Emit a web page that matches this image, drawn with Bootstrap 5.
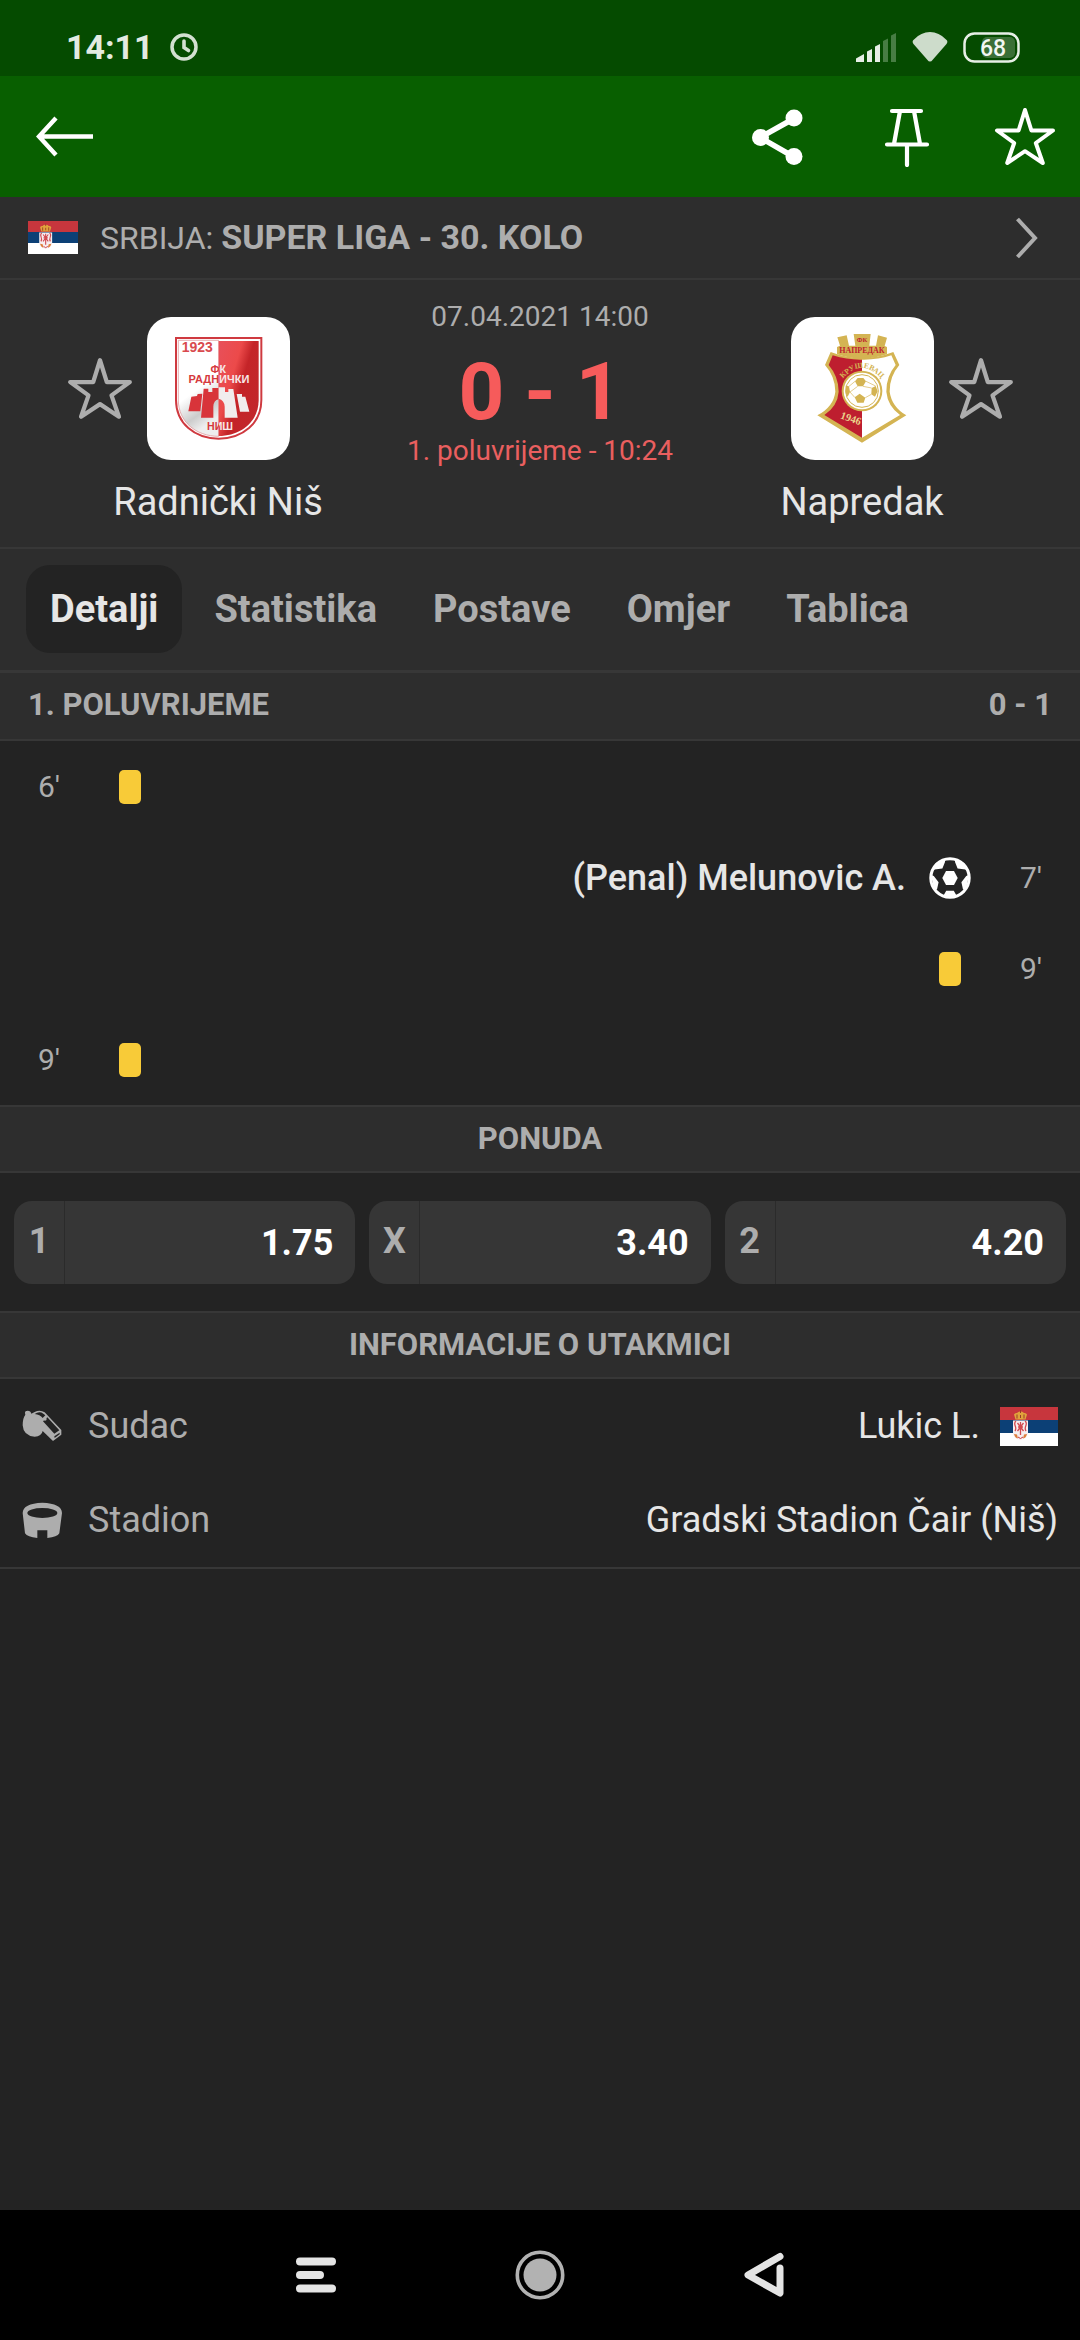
<!DOCTYPE html>
<html lang="hr">
<head>
<meta charset="utf-8">
<meta name="viewport" content="width=device-width, initial-scale=1">
<title>Radnički Niš - Napredak</title>
<link href="https://cdn.jsdelivr.net/npm/bootstrap@5.3.0/dist/css/bootstrap.min.css" rel="stylesheet">
<style>
  :root { --page:#232323; --panel:#2d2d2d; --rule:#373737; --dim:#adadad; --bright:#e6e6e6; --live:#f65b5b; }
  body { background:var(--page); color:var(--bright); font-family:Roboto,"Liberation Sans",sans-serif; font-size:36px; line-height:44px; }
  svg { display:block; flex:none; }
  .plain-btn { background:none; border:0; padding:0; color:inherit; }
  .status-bar { background:#054b00; height:76px; padding:20px 60px 0 66px; color:#e3ebe2; }
  .status-left { gap:16px; }
  .status-right { gap:15px; padding-top:12px; }
  .clock-text { font-size:34px; line-height:54px; font-weight:700; }
  .app-bar { background:#085f00; height:121px; padding:0 24px 0 34px; color:#fff; }
  .app-actions { gap:64px; }
  .share-btn { padding-right:16px; }
  .league-link { background:var(--panel); border-bottom:2px solid var(--rule); height:83px; padding:0 42px 0 28px; gap:22px; color:var(--dim); font-size:32px; text-decoration:none; }
  .league-link strong { font-size:34px; }
  .match-head { background:var(--panel); border-bottom:2px solid var(--rule); height:269px; color:var(--dim); }
  .team-side { flex:1 1 0; padding-top:37px; }
  .side-home { padding-left:36px; }
  .side-away { padding-right:36px; }
  .team-grid { display:grid; grid-template-columns:1fr 143px 1fr; column-gap:14px; align-items:center; }
  .team-logo { border-radius:24px; background:#fff; overflow:hidden; }
  .team-name { font-size:38px; line-height:48px; padding-top:18px; color:var(--bright); }
  .score-col { width:280px; padding-top:20px; white-space:nowrap; }
  .kickoff { font-size:28px; line-height:34px; }
  .score-now { font-size:80px; line-height:80px; font-weight:700; color:var(--live); padding-top:18px; }
  .match-phase { font-size:28px; line-height:34px; color:#ea5f5f; padding-top:2px; }
  .tab-strip { background:var(--panel); border-bottom:3px solid var(--rule); height:124px; padding:16px 26px 0; gap:8px; }
  .tab-strip .nav-link { font-size:38px; line-height:88px; height:88px; padding:0 24px; font-weight:700; color:var(--dim); border-radius:24px; }
  .tab-strip .nav-link.active { background:var(--page); color:var(--bright); }
  .sect-title { background:var(--panel); border-bottom:2px solid var(--rule); height:68px; padding:0 28px; font-size:31px; line-height:64px; font-weight:700; color:var(--dim); margin:0; }
  .sect-ruled { border-top:2px solid var(--rule); text-align:center; }
  .event-row { height:91px; }
  .event-min { width:98px; text-align:center; font-size:30px; color:var(--dim); }
  .event-icon { width:64px; display:flex; justify-content:center; }
  .event-name { font-size:36px; font-weight:500; padding-right:12px; }
  .yellow-card { width:22px; height:34px; border-radius:5px; background:#f8cb38; }
  .odds-row { padding:28px 14px 27px; gap:14px; }
  .odd-btn { flex:1 1 0; background:#363636; border:0; border-radius:18px; height:83px; padding:0; display:flex; align-items:center; font-weight:700; color:#fff; overflow:hidden; }
  .odd-key { width:51px; height:83px; line-height:80px; border-right:1px solid #2b2b2b; color:var(--dim); }
  .odd-val { flex:1; line-height:80px; text-align:right; padding-right:22px; }
  .info-list { border-bottom:2px solid var(--rule); margin:0; }
  .info-row { height:94px; padding:0 22px; }
  .info-row dt { font-weight:400; color:var(--dim); display:flex; align-items:center; gap:24px; }
  .info-row dd { margin:0; display:flex; align-items:center; gap:20px; }
  .info-icon { width:42px; }
  .sys-nav { background:#000; height:130px; }
  .sys-nav button { width:224px; display:flex; justify-content:center; }
</style>
<script src="https://cdn.jsdelivr.net/npm/bootstrap@5.3.0/dist/js/bootstrap.bundle.min.js"></script>
</head>
<body>
<svg width="0" height="0" class="position-absolute" aria-hidden="true">
  <defs>
    <symbol id="star" viewBox="0 0 62 62">
      <path d="M31 4 37.4 24.5H59L41.8 37 48.8 57 31 45.2 13.2 57 20.2 37 3 24.5H24.6Z" fill="none" stroke="currentColor" stroke-width="4" stroke-linejoin="round"/>
    </symbol>
    <symbol id="flag-rs" viewBox="0 0 58 39" preserveAspectRatio="none">
      <path fill="#c7363d" d="M0 0h58v13H0z"/><path fill="#0c4076" d="M0 13h58v13H0z"/><path fill="#fff" d="M0 26h58v13H0z"/>
      <path d="M13 13.500h15v12q0 6-7.500 7.500-7.500-1.500-7.500-7.500z" fill="#f6eef0"/>
      <path d="M16 14c-4 3 2 6-1 10M25 14c4 3-2 6 1 10M20.500 15v13M18 20h5M17.500 16l6 8M23.500 16l-6 8" stroke="#d24a50" stroke-width="1.300" fill="none"/>
      <path d="M14 27q1 4 4 4.500l-1-4zM27 27q-1 4-4 4.500l1-4z" fill="#dd7d3a"/>
      <path d="M18 30q2.500 3 5 0" stroke="#c7363d" fill="none"/>
      <path d="M15.500 12.500 14 7.500q1-2 3-1.500 1.500-2 3.500-1.500 2-.5 3.500 1.500 2-.5 3 1.500l-1.500 5z" fill="#e0a33c"/>
      <path d="M20.500 3v3M17 7.500v4M24 7.500v4M20.500 8v3" stroke="#9c3a28" stroke-width="1"/>
    </symbol>
  </defs>
</svg>
<div class="d-flex flex-column min-vh-100">
  <div class="status-bar d-flex justify-content-between align-items-start">
    <div class="status-left d-flex align-items-center">
      <span class="clock-text">14:11</span>
      <svg width="28" height="28" viewBox="0 0 28 28" fill="none" stroke="#d3e0d1"><circle cx="14" cy="14" r="12" stroke-width="3.500"/><path d="M14 8v6.500l4.500 3" stroke-width="3.600" stroke-linecap="round"/></svg>
    </div>
    <div class="status-right d-flex">
      <svg width="42" height="31" viewBox="0 0 42 31"><path fill="#e7efe6" d="M1 30v-3.500l8-4.500v8zM12 30V19.500l5-2.500v13zM20 30V14.500l5-2.500v18z"/><path fill="#477d43" d="M28 30V9l5-2.500V30zM36 30V3.500L41 1v29z"/></svg>
      <svg width="36" height="30" viewBox="0 0 36 30"><path d="M18 29.500q-1.500 0-2.500-1.500L1.500 12q-2-3 .5-4.500Q9 0 18 0t16 7.500q2.500 1.500.5 4.500L20.500 28q-1 1.500-2.500 1.500z" fill="#cddccb"/></svg>
      <svg width="57" height="31" viewBox="0 0 57 31"><rect x="19" y="5" width="33" height="21" rx="5" fill="#3a6f36"/><rect x="1.500" y="1.500" width="54" height="28" rx="10" fill="none" stroke="#e7efe6" stroke-width="2.500"/><text x="30" y="24" text-anchor="middle" font-family="Roboto,sans-serif" font-size="23" font-weight="500" fill="#f2f6f1">68</text></svg>
    </div>
  </div>

  <header class="app-bar d-flex justify-content-between align-items-center">
    <button class="plain-btn" aria-label="Natrag"><svg width="60" height="42" viewBox="0 0 60 42" fill="none" stroke="#fff" stroke-width="4.400"><path d="M59 20.500H6M22 2 5 20.500 22 39"/></svg></button>
    <div class="app-actions d-flex align-items-center">
      <button class="plain-btn share-btn" aria-label="Podijeli"><svg width="54" height="58" viewBox="0 0 54 58"><path d="M44 10.500 10 29.500 44 49" fill="none" stroke="#fff" stroke-width="5.500"/><g fill="#fff"><circle cx="44" cy="10" r="8.500"/><circle cx="10.500" cy="29.500" r="8.500"/><circle cx="44" cy="48.500" r="8.500"/></g></svg></button>
      <button class="plain-btn" aria-label="Prikvači"><svg width="46" height="60" viewBox="0 0 46 60" fill="none" stroke="#fff" stroke-width="4.200" stroke-linecap="round" stroke-linejoin="round"><path d="M8 4H37M3 37.500H43M16 4 10 37M30 4 36 37M23 38V58"/></svg></button>
      <button class="plain-btn" aria-label="Dodaj u favorite"><svg width="62" height="62"><use href="#star"/></svg></button>
    </div>
  </header>

  <main class="flex-grow-1">
    <a href="#" class="league-link d-flex align-items-center">
      <svg width="50" height="33"><use href="#flag-rs"/></svg>
      <span class="flex-grow-1">SRBIJA: <strong>SUPER LIGA - 30. KOLO</strong></span>
      <svg width="22" height="42" viewBox="0 0 22 42" fill="none" stroke="#adadad" stroke-width="4"><path d="M1.500 2 19 21 1.500 40"/></svg>
    </a>

    <section class="match-head d-flex">
      <div class="team-side side-home">
        <div class="team-grid">
          <button class="plain-btn ms-auto" aria-label="Prati Radnički Niš"><svg width="66" height="66"><use href="#star"/></svg></button>
          <svg class="team-logo" width="143" height="143" viewBox="18 21 429 429" font-family="Liberation Sans,sans-serif" font-weight="700">
            <defs>
              <linearGradient id="rn-red" x1="0" y1="0" x2="1" y2=".7"><stop offset="0" stop-color="#e8505a"/><stop offset=".4" stop-color="#ec4a4a"/><stop offset=".6" stop-color="#c42428"/><stop offset="1" stop-color="#c2272b"/></linearGradient>
              <linearGradient id="rn-white" x1="0" y1="0" x2=".3" y2="1"><stop offset=".6" stop-color="#fff"/><stop offset=".85" stop-color="#ccc"/><stop offset="1" stop-color="#eee"/></linearGradient>
              <clipPath id="rn-l"><path d="M18 21H234V450H18z"/></clipPath><clipPath id="rn-r"><path d="M234 21H447V450H234z"/></clipPath>
            </defs>
            <path d="M105 84H361V270C361 340 305 386 233 386S105 340 105 270Z" fill="#fff" stroke="#cf3a40" stroke-width="6"/>
            <path d="M112 91H233V379C165 379 112 335 112 270Z" fill="url(#rn-white)" stroke="#dd8a8c" stroke-width="2"/>
            <path d="M233 93H353V270C353 335 300 377 233 378Z" fill="url(#rn-red)"/>
            <text x="122" y="127" font-size="42" fill="#d94a4e">1923</text>
            <g clip-path="url(#rn-l)" fill="#d63a3e"><text x="232" y="190" font-size="32" text-anchor="middle">ФК</text><text x="234" y="219" font-size="33" text-anchor="middle">РАДНИЧКИ</text><text x="237" y="359" font-size="32" text-anchor="middle">НИШ</text></g>
            <g clip-path="url(#rn-r)" fill="#f7e8e8" aria-hidden="true"><text x="232" y="190" font-size="32" text-anchor="middle">ФК</text><text x="234" y="219" font-size="33" text-anchor="middle">РАДНИЧКИ</text><text x="237" y="359" font-size="32" text-anchor="middle">НИШ</text></g>
            <path d="M151 260 168 258 170 252 184 251 178 304H142ZM188 236H202V246H214V234H233V268Q218 270 217 290V323H180Z" fill="#d8343a"/>
            <path d="M233 232H252V246H262V237H277L290 323H251V290Q250 270 233 266ZM287 252H303V260H313L325 305H297Z" fill="#f1eded"/>
          </svg>
          <span></span>
        </div>
        <div class="team-name text-center">Radnički Niš</div>
      </div>
      <div class="score-col text-center">
        <div class="kickoff">07.04.2021 14:00</div>
        <div class="score-now">0 - 1</div>
        <div class="match-phase">1. poluvrijeme - 10:24</div>
      </div>
      <div class="team-side side-away">
        <div class="team-grid">
          <span></span>
          <svg class="team-logo" width="143" height="143" viewBox="30 21 429 429" font-family="Liberation Serif,serif" font-weight="700">
            <path d="M149 126Q243 162 337 126L355 165Q325 200 326 245 332 290 376 316L243 398 109 316Q158 290 163 245 163 200 132 165Z" fill="#d4b453"/>
            <path d="M155 136Q200 150 243 149V383L130 315Q170 288 173 245 173 200 143 165Z" fill="#be1e2f"/>
            <path d="M243 149Q290 150 331 136L344 165Q315 200 316 245 320 288 357 315L243 383Z" fill="#fff"/>
            <path d="M168 111 177 107 169 82 197 76 204 107H223L218 72H269L265 107H285L291 76 318 83 311 108 318 111V133Q243 158 168 133Z" fill="#d4b453"/>
            <g fill="#be1e2f" text-anchor="middle"><text x="243" y="97" font-size="20">ФК</text><text x="243" y="130" font-size="24">НАПРЕДАК</text></g>
            <path id="arc" d="M185 206Q243 142 301 206" fill="none"/>
            <text font-size="23" fill="#d4b453" text-anchor="middle"><textPath href="#arc" startOffset="50%">КРУШЕВАЦ</textPath></text>
            <circle cx="243" cy="243" r="61" fill="#d4b453"/><circle cx="243" cy="243" r="55" fill="#fff"/><circle cx="243" cy="243" r="49" fill="#fff" stroke="#d4b453" stroke-width="3"/>
            <path d="M222 214 230 204H247L255 214 246 229H230ZM194 227 204 229 207 246 200 260 194 250ZM272 234 284 228 290 244 282 260 271 253ZM221 262 236 251 253 263 248 278H229Z" fill="#d4b453"/>
            <path d="M230 229 207 246M207 246 221 262M253 263 271 253M246 229 272 234M255 214 284 228M222 214 204 229" stroke="#d4b453" stroke-width="2"/>
            <text x="176" y="325" font-size="32" fill="#ead08a" transform="rotate(19 176 325)">1946</text>
          </svg>
          <button class="plain-btn me-auto" aria-label="Prati Napredak"><svg width="66" height="66"><use href="#star"/></svg></button>
        </div>
        <div class="team-name text-center">Napredak</div>
      </div>
    </section>

    <nav class="nav nav-pills flex-nowrap tab-strip">
      <a class="nav-link active" aria-current="page" href="#">Detalji</a>
      <a class="nav-link" href="#">Statistika</a>
      <a class="nav-link" href="#">Postave</a>
      <a class="nav-link" href="#">Omjer</a>
      <a class="nav-link" href="#">Tablica</a>
    </nav>

    <h2 class="sect-title d-flex justify-content-between"><span>1. POLUVRIJEME</span><span>0 - 1</span></h2>
    <div class="event-row d-flex align-items-center"><span class="event-min">6'</span><span class="event-icon"><span class="yellow-card"></span></span></div>
    <div class="event-row d-flex align-items-center justify-content-end">
      <span class="event-name">(Penal) Melunovic A.</span>
      <span class="event-icon"><svg width="42" height="42" viewBox="-21 -21 42 42" fill="#fff"><circle r="19.200" fill="none" stroke="#fff" stroke-width="3"/><path d="M-7.700 0-4-7H4L7.700 0 4 7H-4Z"/><path d="M-5-19V-16L-7.600-9.500-15.500-8.500-18-7-14-15ZM5-19V-16L7.600-9.500 15.500-8.500 18-7 14-15ZM-19-3-16.200-2-11.400 4.300-13 11.500-16 11ZM19-3 16.200-2 11.400 4.300 13 11.500 16 11ZM-7 18.500-3.800 12.700H3.800L7 18.500 0 20Z"/></svg></span>
      <span class="event-min">7'</span>
    </div>
    <div class="event-row d-flex align-items-center justify-content-end"><span class="event-icon"><span class="yellow-card"></span></span><span class="event-min">9'</span></div>
    <div class="event-row d-flex align-items-center"><span class="event-min">9'</span><span class="event-icon"><span class="yellow-card"></span></span></div>

    <h2 class="sect-title sect-ruled">PONUDA</h2>
    <div class="odds-row d-flex">
      <button class="odd-btn"><span class="odd-key">1</span><span class="odd-val">1.75</span></button>
      <button class="odd-btn"><span class="odd-key">X</span><span class="odd-val">3.40</span></button>
      <button class="odd-btn"><span class="odd-key">2</span><span class="odd-val">4.20</span></button>
    </div>

    <h2 class="sect-title sect-ruled">INFORMACIJE O UTAKMICI</h2>
    <dl class="info-list">
      <div class="info-row d-flex justify-content-between align-items-center">
        <dt><svg class="info-icon" height="32" viewBox="42 36 126 96"><path fill="#adadad" d="M52 50Q48 38 59 38 68 38 70 47L80 42Q96 34 110 43L160 96V110L135 129 104 99Q101 115 80 116 46 114 44 82 44 60 52 50Z"/><path fill="#232323" d="M80 48Q94 38 106 47L112 52 104 60Q96 50 80 48ZM118 58 154 97 139 107 105 70ZM139 115 155 104V109L140 120Z"/><circle cx="111" cy="63" r="5" fill="#adadad"/></svg>Sudac</dt>
        <dd>Lukic L.<svg width="58" height="39"><use href="#flag-rs"/></svg></dd>
      </div>
      <div class="info-row d-flex justify-content-between align-items-center">
        <dt><svg class="info-icon" height="37" viewBox="39 304 126 111"><path fill="#adadad" d="M41 337Q42 308 100 306 158 308 159 337L151 398Q145 409 115 412V389H85V412Q55 409 48 398Z"/><ellipse cx="100" cy="337" rx="45" ry="15" fill="#232323"/></svg>Stadion</dt>
        <dd>Gradski Stadion Čair (Niš)</dd>
      </div>
    </dl>
  </main>

  <footer class="sys-nav d-flex justify-content-center align-items-center">
    <button class="plain-btn" aria-label="Nedavno"><svg width="42" height="36" viewBox="0 0 42 36" stroke="#e4e4e4" stroke-width="8" stroke-linecap="round"><path d="M5 4.500H37M5 18H25M5 31.500H37"/></svg></button>
    <button class="plain-btn" aria-label="Početna"><svg width="50" height="50" viewBox="0 0 50 50"><circle cx="25" cy="25" r="22.700" fill="none" stroke="#b2b2b2" stroke-width="3.600"/><circle cx="25" cy="25" r="16.500" fill="#b2b2b2"/></svg></button>
    <button class="plain-btn" aria-label="Natrag"><svg width="42" height="46" viewBox="0 0 42 46" fill="none" stroke="#e4e4e4" stroke-width="7" stroke-linecap="round" stroke-linejoin="round"><path d="M37 4.500 5 23 37 41V16"/></svg></button>
  </footer>
</div>
</body>
</html>
